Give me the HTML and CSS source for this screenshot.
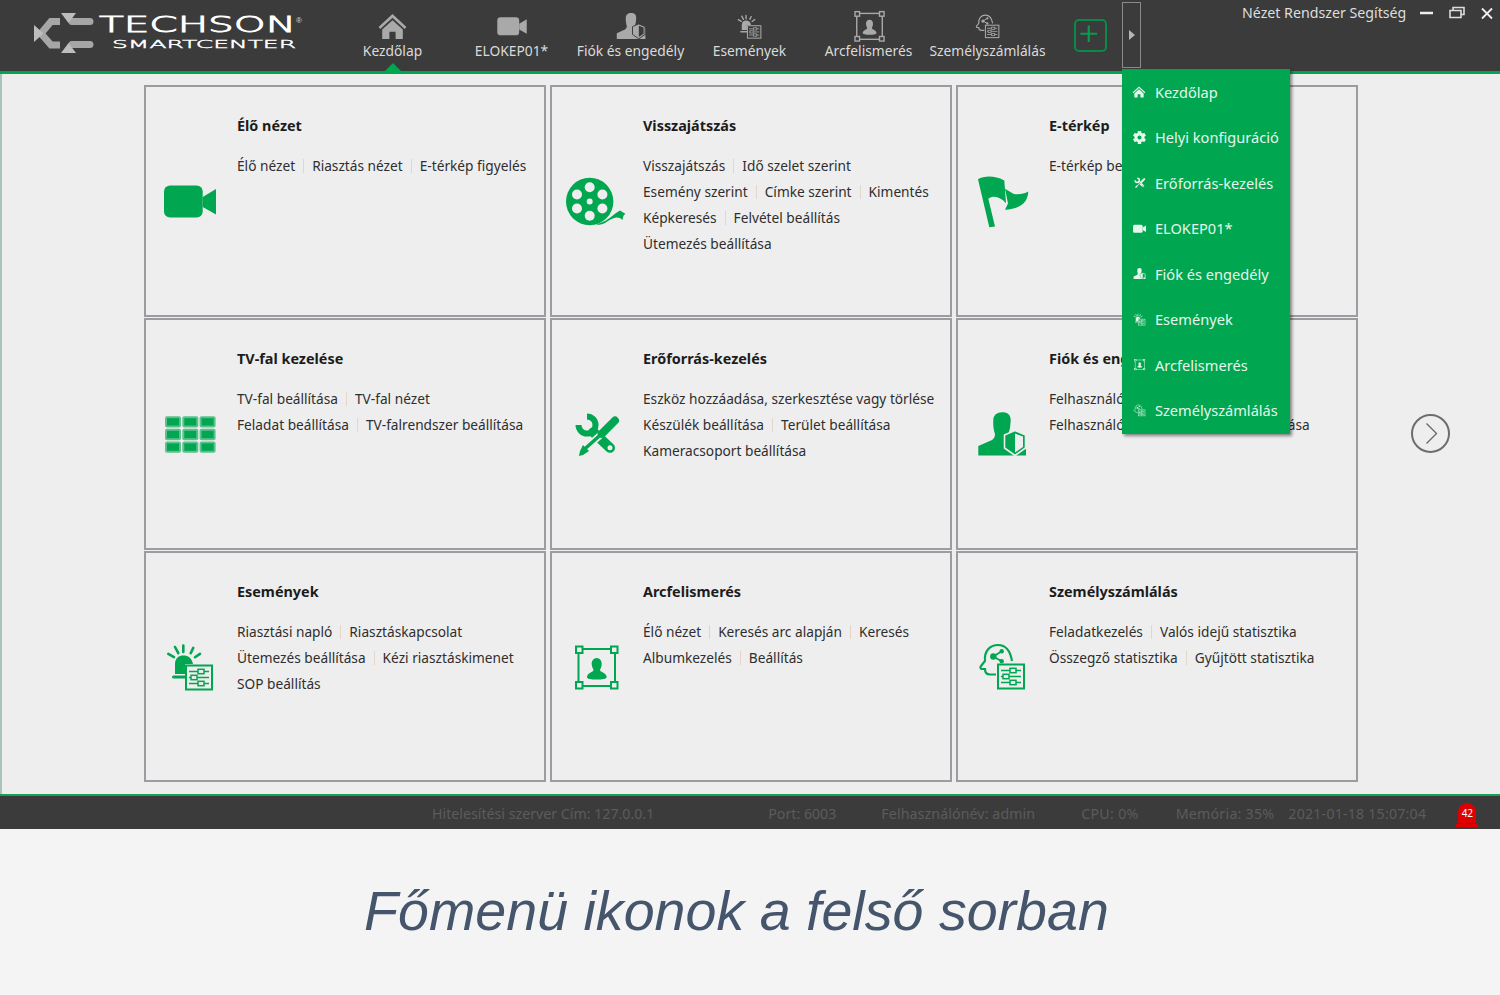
FILE: index.html
```html
<!DOCTYPE html>
<html lang="hu">
<head>
<meta charset="utf-8">
<title>Techson SmartCenter</title>
<link rel="stylesheet" href="styles.css">
</head>
<body>
<svg class="defs" width="0" height="0" aria-hidden="true">
  <defs>
    <g id="panel">
      <rect x="1" y="1" width="26" height="24" fill="var(--ko)" stroke="currentColor" stroke-width="2"/>
      <path d="M4 7H24M4 13H24M4 19H24" stroke="currentColor" stroke-width="1.6"/>
      <rect x="13" y="4.8" width="6" height="4.4" fill="var(--ko)" stroke="currentColor" stroke-width="1.5"/>
      <rect x="6" y="10.8" width="6" height="4.4" fill="var(--ko)" stroke="currentColor" stroke-width="1.5"/>
      <rect x="13" y="16.8" width="6" height="4.4" fill="var(--ko)" stroke="currentColor" stroke-width="1.5"/>
    </g>
    <g id="cell">
      <rect width="16" height="11.4" rx="2" fill="currentColor" opacity=".62"/>
      <rect x="2" y="2" width="12" height="7.4" fill="currentColor"/>
    </g>
  </defs>
  <symbol id="i-home" viewBox="0 0 60 60">
    <path fill="currentColor" d="M30 6 3 31l3.500 4L30 13l23.500 22 3.500-4z"/>
    <path fill="currentColor" d="M30 18 10 36v18h14V40h12v14h14V36z"/>
  </symbol>
  <symbol id="i-camera" viewBox="0 0 60 60">
    <rect x="4" y="14.500" width="38.700" height="32" rx="6" fill="currentColor"/>
    <path fill="currentColor" d="M42.700 26 56 18v25.500L42.700 36z"/>
  </symbol>
  <symbol id="i-reel" viewBox="0 0 60 60">
    <path fill="currentColor" d="M34 52C42 50 46 44 54 39.500L59.700 43C58 43 57 45 56.500 49C53 45 48 46 42 50C38 53 34 54 30 54z"/>
    <circle cx="23.700" cy="30.500" r="23.700" fill="currentColor"/>
    <g fill="var(--ko)">
      <circle cx="23.700" cy="16.200" r="5"/><circle cx="36.400" cy="23.500" r="5"/><circle cx="36.400" cy="37.500" r="5"/>
      <circle cx="23.700" cy="44.800" r="5"/><circle cx="11" cy="37.500" r="5"/><circle cx="11" cy="23.500" r="5"/>
      <circle cx="23.700" cy="30.500" r="3"/>
    </g>
  </symbol>
  <symbol id="i-flag" viewBox="0 0 60 60">
    <path fill="currentColor" d="M6 8.200C12 5 22 4 32.300 9.500L34 32.200C28 26 22 24 16.300 27.800L23 55.500 17.300 56.200z"/>
    <path fill="currentColor" d="M33 17.800 41.300 22.800C46 24 52 23 56.300 20.500C56 30 50 38 33 38.800L36 32.500z"/>
  </symbol>
  <symbol id="i-wall" viewBox="0 0 60 60">
    <use href="#cell" x="5" y="12.200"/><use href="#cell" x="22.300" y="12.200"/><use href="#cell" x="39.600" y="12.200"/>
    <use href="#cell" x="5" y="24.800"/><use href="#cell" x="22.300" y="24.800"/><use href="#cell" x="39.600" y="24.800"/>
    <use href="#cell" x="5" y="37.400"/><use href="#cell" x="22.300" y="37.400"/><use href="#cell" x="39.600" y="37.400"/>
  </symbol>
  <symbol id="i-tools" viewBox="0 0 60 60">
    <path d="M12.500 21A8.500 8.500 0 1 0 21 12.500" fill="none" stroke="currentColor" stroke-width="6"/>
    <path d="M27.300 28.200 44 43.800" stroke="currentColor" stroke-width="10" stroke-linecap="round"/>
    <circle cx="44" cy="43.800" r="2.500" fill="var(--ko)"/>
    <path d="M35.700 29.800 19 44.800" stroke="var(--ko)" stroke-width="7"/>
    <path d="M49 16.500 35.700 29.800" stroke="currentColor" stroke-width="8" stroke-linecap="round"/>
    <path d="M35.700 29.800 19 44.800" stroke="currentColor" stroke-width="3.500"/>
    <path fill="currentColor" d="M17 41 23 47 17 51 13 52 14 47z"/>
  </symbol>
  <symbol id="i-user" viewBox="0 0 60 60">
    <path fill="currentColor" d="M30 8.200C36 8.200 39 11 38.700 17L38 24C37 28 36 30 36 33L54 33V51.500H6.300V42L20 36C23 34 23 31 23 30C21.500 26 21 20 21.300 16C21.300 11 25 8.200 30 8.200z"/>
    <path fill="currentColor" stroke="var(--ko)" stroke-width="1.600" d="M32.500 31 43 26.500 53.500 31V44L43 51.500 32.500 44z"/>
    <path fill="var(--ko)" d="M43 29.500 51 32.500V43L43 48.500z"/>
  </symbol>
  <symbol id="i-alarm" viewBox="0 0 60 60">
    <path d="M23.300 8.500V15M15 10l3.300 6.200M33.300 10.800l-2.600 5.400M8.300 16.800l5.700 3.400M40 16.800l-5 3.400" stroke="currentColor" stroke-width="2.600" stroke-linecap="round"/>
    <path fill="currentColor" d="M15 37V27C15 21 19 18.500 23.300 18.500C28 18.500 32 21 33 27H25V37z"/>
    <path d="M13.500 40H25" stroke="currentColor" stroke-width="3" stroke-linecap="round"/>
    <use href="#panel" x="25" y="27.500"/>
  </symbol>
  <symbol id="i-face" viewBox="0 0 60 60">
    <rect x="12.500" y="12" width="36.500" height="37" fill="none" stroke="currentColor" stroke-width="2"/>
    <g fill="var(--ko)" stroke="currentColor" stroke-width="2">
      <rect x="10" y="9.500" width="6.500" height="6.500"/><rect x="45" y="9.500" width="6.500" height="6.500"/>
      <rect x="10" y="45" width="6.500" height="6.500"/><rect x="45" y="45" width="6.500" height="6.500"/>
    </g>
    <path fill="currentColor" d="M30.700 21C34 21 36 24 35.700 27.500C35.500 30 34.500 31.500 34 33C34 35 40.700 36 40.700 40C40.700 42 36 42.500 30.700 42.500C25 42.500 21 42 21 40C21 36 27.500 35 27.500 33C27 31.500 26 30 25.700 27.500C25.400 24 27.500 21 30.700 21z"/>
  </symbol>
  <symbol id="i-head" viewBox="0 0 60 60">
    <path d="M24 37.500H18C14 37.500 13 35 13 32H9.500C8.500 32 8 30 9 29L13 24C12 14 18 8 26 8C33 8 38 12 40 24" fill="none" stroke="currentColor" stroke-width="2.200"/>
    <path d="M21.300 19.500 29.700 14.200M21.300 19.500 29.700 24.200" stroke="currentColor" stroke-width="1.800"/>
    <circle cx="21.300" cy="19.500" r="3.200" fill="currentColor"/><circle cx="29.700" cy="14.200" r="2.200" fill="currentColor"/><circle cx="29.700" cy="24.200" r="2.200" fill="currentColor"/>
    <use href="#panel" x="25" y="26.500"/>
  </symbol>
  <symbol id="i-gear" viewBox="0 0 60 60">
    <g fill="currentColor">
      <rect x="23" y="4" width="14" height="52"/>
      <rect x="23" y="4" width="14" height="52" transform="rotate(60 30 30)"/>
      <rect x="23" y="4" width="14" height="52" transform="rotate(120 30 30)"/>
      <circle cx="30" cy="30" r="20"/>
    </g>
    <circle cx="30" cy="30" r="8" fill="var(--ko)"/>
  </symbol>
</svg>

<div class="app">
  <header class="topbar">
    <svg class="logo" viewBox="0 0 333 71" width="333" height="71" role="img" aria-label="Techson SmartCenter">
      <path d="M60 21.500H51L41 33.500 51 45H60" fill="none" stroke="#a6a6a6" stroke-width="7"/>
      <path d="M72 21.500H90M72 44.500H90" stroke="#a6a6a6" stroke-width="7" stroke-linecap="round"/>
      <path fill="#bdbdbd" d="M61 13H76L68.500 23zM61 53H76L68.500 43zM34 25 43.500 33.500 34 42z"/>
      <text class="logo-main" x="99" y="32" textLength="197" lengthAdjust="spacingAndGlyphs">TECHSON</text>
      <text class="logo-reg" x="296" y="23">®</text>
      <text class="logo-sub" x="112" y="48" textLength="184" lengthAdjust="spacingAndGlyphs">SMARTCENTER</text>
    </svg>
    <nav class="nav">
      <a class="nav-item active"><span class="nav-icon"><svg class="s-31"><use href="#i-home"/></svg></span><span>Kezdőlap</span></a>
      <a class="nav-item"><span class="nav-icon"><svg class="s-34"><use href="#i-camera"/></svg></span><span>ELOKEP01*</span></a>
      <a class="nav-item"><span class="nav-icon"><svg class="s-36"><use href="#i-user"/></svg></span><span>Fiók és engedély</span></a>
      <a class="nav-item"><span class="nav-icon"><svg class="s-31"><use href="#i-alarm"/></svg></span><span>Események</span></a>
      <a class="nav-item"><span class="nav-icon"><svg class="s-42"><use href="#i-face"/></svg></span><span>Arcfelismerés</span></a>
      <a class="nav-item"><span class="nav-icon"><svg class="s-31"><use href="#i-head"/></svg></span><span>Személyszámlálás</span></a>
    </nav>
    <button class="add-btn" aria-label="Hozzáadás"><svg viewBox="0 0 33 33" width="29" height="29"><path d="M14.500 5V24M5 14.500H24" stroke="currentColor" stroke-width="2.500"/></svg></button>
    <div class="more">
      <div class="more-btn"><span class="more-arrow"></span></div>
      <ul class="menu">
        <li><svg class="m-14"><use href="#i-home"/></svg><span>Kezdőlap</span></li>
        <li><svg class="m-15"><use href="#i-gear"/></svg><span>Helyi konfiguráció</span></li>
        <li><svg class="m-15"><use href="#i-tools"/></svg><span>Erőforrás-kezelés</span></li>
        <li><svg class="m-15"><use href="#i-camera"/></svg><span>ELOKEP01*</span></li>
        <li><svg class="m-15"><use href="#i-user"/></svg><span>Fiók és engedély</span></li>
        <li><svg class="m-15"><use href="#i-alarm"/></svg><span>Események</span></li>
        <li><svg class="m-15"><use href="#i-face"/></svg><span>Arcfelismerés</span></li>
        <li><svg class="m-15"><use href="#i-head"/></svg><span>Személyszámlálás</span></li>
      </ul>
    </div>
    <div class="window">
      <span class="win-menu">Nézet Rendszer Segítség</span>
      <svg class="win-ctl" viewBox="0 0 76 26" width="76" height="26" aria-hidden="true">
        <path d="M0 13H13" stroke="#eee" stroke-width="2.500"/>
        <path d="M30 10.500H41V17.500H30zM33 10V7.500H44V14.500H41" fill="none" stroke="#ddd" stroke-width="1.600"/>
        <path d="M62 8.500 72 18.500M72 8.500 62 18.500" stroke="#eee" stroke-width="1.800"/>
      </svg>
    </div>
  </header>

  <main class="content">
    <div class="grid">
      <section class="card">
        <div class="card-icon"><svg><use href="#i-camera"/></svg></div>
        <div class="card-body">
          <h2>Élő nézet</h2>
          <p><a>Élő nézet</a><a>Riasztás nézet</a><a>E-térkép figyelés</a></p>
        </div>
      </section>
      <section class="card">
        <div class="card-icon"><svg><use href="#i-reel"/></svg></div>
        <div class="card-body">
          <h2>Visszajátszás</h2>
          <p><a>Visszajátszás</a><a>Idő szelet szerint</a></p>
          <p><a>Esemény szerint</a><a>Címke szerint</a><a>Kimentés</a></p>
          <p><a>Képkeresés</a><a>Felvétel beállítás</a></p>
          <p><a>Ütemezés beállítása</a></p>
        </div>
      </section>
      <section class="card">
        <div class="card-icon"><svg><use href="#i-flag"/></svg></div>
        <div class="card-body">
          <h2>E-térkép</h2>
          <p><a>E-térkép beállítása</a></p>
        </div>
      </section>
      <section class="card">
        <div class="card-icon"><svg><use href="#i-wall"/></svg></div>
        <div class="card-body">
          <h2>TV-fal kezelése</h2>
          <p><a>TV-fal beállítása</a><a>TV-fal nézet</a></p>
          <p><a>Feladat beállítása</a><a>TV-falrendszer beállítása</a></p>
        </div>
      </section>
      <section class="card">
        <div class="card-icon"><svg><use href="#i-tools"/></svg></div>
        <div class="card-body">
          <h2>Erőforrás-kezelés</h2>
          <p><a>Eszköz hozzáadása, szerkesztése vagy törlése</a></p>
          <p><a>Készülék beállítása</a><a>Terület beállítása</a></p>
          <p><a>Kameracsoport beállítása</a></p>
        </div>
      </section>
      <section class="card">
        <div class="card-icon"><svg><use href="#i-user"/></svg></div>
        <div class="card-body">
          <h2>Fiók és engedély</h2>
          <p><a>Felhasználó kezelése</a></p>
          <p><a>Felhasználók</a><a>Jogosultságkör beállítása</a></p>
        </div>
      </section>
      <section class="card">
        <div class="card-icon"><svg><use href="#i-alarm"/></svg></div>
        <div class="card-body">
          <h2>Események</h2>
          <p><a>Riasztási napló</a><a>Riasztáskapcsolat</a></p>
          <p><a>Ütemezés beállítása</a><a>Kézi riasztáskimenet</a></p>
          <p><a>SOP beállítás</a></p>
        </div>
      </section>
      <section class="card">
        <div class="card-icon"><svg><use href="#i-face"/></svg></div>
        <div class="card-body">
          <h2>Arcfelismerés</h2>
          <p><a>Élő nézet</a><a>Keresés arc alapján</a><a>Keresés</a></p>
          <p><a>Albumkezelés</a><a>Beállítás</a></p>
        </div>
      </section>
      <section class="card">
        <div class="card-icon"><svg><use href="#i-head"/></svg></div>
        <div class="card-body">
          <h2>Személyszámlálás</h2>
          <p><a>Feladatkezelés</a><a>Valós idejű statisztika</a></p>
          <p><a>Összegző statisztika</a><a>Gyűjtött statisztika</a></p>
        </div>
      </section>
    </div>
    <button class="next" aria-label="Következő"><svg viewBox="0 0 35 35" width="35" height="35"><path d="M13.500 7.500 23.500 17.500 13.500 27.500" fill="none" stroke="#666" stroke-width="1.300"/></svg></button>
  </main>

  <footer class="status">
    <span class="st-server">Hitelesítési szerver Cím: 127.0.0.1</span>
    <span class="st-port">Port: 6003</span>
    <span class="st-user">Felhasználónév: admin</span>
    <span class="st-cpu">CPU: 0%</span>
    <span class="st-mem">Memória: 35%</span>
    <span class="st-date">2021-01-18 15:07:04</span>
    <span class="alert">42</span>
  </footer>
</div>

<div class="caption"><p>Főmenü ikonok a felső sorban</p></div>
</body>
</html>
```

FILE: styles.css
```css
* { box-sizing: border-box; }
html, body { margin: 0; padding: 0; }
body {
  width: 1500px;
  height: 995px;
  overflow: hidden;
  background: #f4f4f4;
  font-family: "Noto Sans", "Open Sans", sans-serif;
  font-size: 14px;
  color: #2b2b2b;
}
.defs { position: absolute; }

.app { width: 1500px; height: 829px; display: flex; flex-direction: column; }

/* Top bar */
.topbar {
  --ko: #3b3b3b;
  flex: none;
  height: 74px;
  display: flex;
  align-items: flex-start;
  background: #3b3b3b;
  border-bottom: 3px solid #00a650;
  color: #dcdcdc;
}
.logo { flex: none; display: block; }
.logo-main { font-family: "DejaVu Sans Light", "DejaVu Sans", sans-serif; font-weight: 200; font-size: 21px; fill: #fff; stroke: #fff; stroke-width: .8px; }
.logo-reg { font-family: "Liberation Sans", sans-serif; font-size: 8px; fill: #ddd; }
.logo-sub { font-family: "DejaVu Sans Light", "DejaVu Sans", sans-serif; font-weight: 200; font-size: 11px; fill: #fff; stroke: #fff; stroke-width: .4px; }

.nav { display: flex; flex: none; }
.nav-item {
  position: relative;
  width: 119px;
  height: 71px;
  padding-top: 8px;
  display: flex;
  flex-direction: column;
  align-items: center;
  font-size: 13.800px;
  line-height: 20px;
  white-space: nowrap;
  color: #dadada;
}
.nav-icon { height: 36px; margin-bottom: -3px; display: flex; align-items: center; justify-content: center; color: #a9a9a9; }
.nav-icon svg { flex: none; }
.s-31 { width: 31px; height: 31px; }
.s-34 { width: 34px; height: 34px; }
.s-36 { width: 36px; height: 36px; }
.s-42 { width: 42px; height: 42px; }
.nav-item.active::after {
  content: "";
  position: absolute;
  left: 52px;
  top: 63px;
  border-left: 8px solid transparent;
  border-right: 8px solid transparent;
  border-bottom: 8px solid #00a650;
}

.add-btn {
  flex: none;
  width: 33px;
  height: 33px;
  margin: 19px 0 0 27px;
  padding: 0;
  display: flex;
  align-items: center;
  justify-content: center;
  background: none;
  border: 2px solid #0a8a48;
  border-radius: 5px;
  color: #0a9a50;
}

.more { position: relative; flex: none; margin: 2px 0 0 15px; }
.more-btn {
  width: 19px;
  height: 66px;
  border: 1px solid #8a8a8a;
  display: flex;
  align-items: center;
  padding-left: 6px;
}
.more-arrow { border-left: 6px solid #b5b5b5; border-top: 5px solid transparent; border-bottom: 5px solid transparent; }

.menu {
  --ko: #00a650;
  position: absolute;
  z-index: 5;
  left: 0;
  top: 67px;
  width: 168px;
  height: 365px;
  margin: 0;
  padding: 0;
  list-style: none;
  background: #00a650;
  box-shadow: 2px 2px 3px rgba(0, 0, 0, .45);
  color: #e6f6ec;
  font-size: 14.600px;
}
.menu li { height: 45.500px; display: flex; align-items: center; padding-left: 10px; white-space: nowrap; }
.menu svg { flex: none; }
.m-14 { width: 14px; height: 14px; margin-right: 9px; }
.m-15 { width: 15px; height: 15px; margin-right: 8px; }

.window { flex: none; margin-left: 101px; display: flex; align-items: flex-start; white-space: nowrap; }
.win-menu { font-size: 14.200px; line-height: 26px; color: #dedede; }
.win-ctl { display: block; margin-left: 14px; }

/* Main */
.content {
  --ko: #eeeeee;
  flex: 1;
  min-height: 0;
  display: flex;
  align-items: center;
  align-self: stretch;
  padding: 11px 0 12px 141.500px;
  background: #eeeeee;
  border-left: 2px solid #a9c4b8;
}
.grid {
  flex: none;
  display: grid;
  grid-template-columns: repeat(3, 402.500px);
  grid-template-rows: 232px 232px 231px;
  gap: 1px 3.500px;
}
.card { display: flex; border: 2px solid #9b9ba0; background: #eeeeee; min-width: 0; }
.card-icon { flex: none; width: 91.500px; padding-left: 14.500px; display: flex; align-items: center; color: #00a650; }
.card-icon svg { width: 60px; height: 60px; display: block; flex: none; }
.card-body { flex: 1; min-width: 0; padding-top: 29px; }
.card-body h2 { margin: 0 0 17px; font-size: 14.400px; line-height: 20px; font-weight: 700; color: #1c1c1c; }
.card-body p { margin: 0; font-size: 13.700px; line-height: 26px; white-space: nowrap; color: #2e2e2e; }
.card-body a + a::before {
  content: "";
  display: inline-block;
  width: 1px;
  height: 14px;
  margin: 0 8px;
  background: #e3d6c8;
  vertical-align: -2px;
}

.next {
  flex: none;
  width: 39px;
  height: 39px;
  margin-left: 52.500px;
  padding: 0;
  background: none;
  border: 2px solid #6d6d6d;
  border-radius: 50%;
}
.next svg { display: block; }

/* Status bar */
.status {
  flex: none;
  height: 35px;
  display: flex;
  align-items: center;
  padding: 1px 0 0 432px;
  background: #3b3b3b;
  border-top: 2px solid #12a05a;
  color: #5c5c5c;
  font-size: 14.200px;
  white-space: nowrap;
}
.st-port { margin-left: 114px; }
.st-user { margin-left: 45px; letter-spacing: .1px; }
.st-cpu { margin-left: 46px; letter-spacing: .3px; }
.st-mem { margin-left: 37px; letter-spacing: .25px; }
.st-date { margin-left: 14px; letter-spacing: .2px; }
.alert {
  position: relative;
  margin-left: 32px;
  width: 18px;
  height: 20px;
  border-radius: 9px 9px 0 0;
  background: #dc0000;
  color: #fff;
  font-size: 10px;
  letter-spacing: -.3px;
  line-height: 20px;
  text-align: center;
}
.alert::after {
  content: "";
  position: absolute;
  left: -2px;
  right: -2px;
  top: 21px;
  height: 3px;
  background: #dc0000;
}

/* Caption */
.caption { height: 166px; display: flex; align-items: center; justify-content: center; padding: 0 27px 2px 0; }
.caption p {
  margin: 0;
  font-family: "Liberation Sans", Arial, sans-serif;
  font-style: italic;
  font-size: 55.600px;
  color: #45556c;
  white-space: nowrap;
}
```
